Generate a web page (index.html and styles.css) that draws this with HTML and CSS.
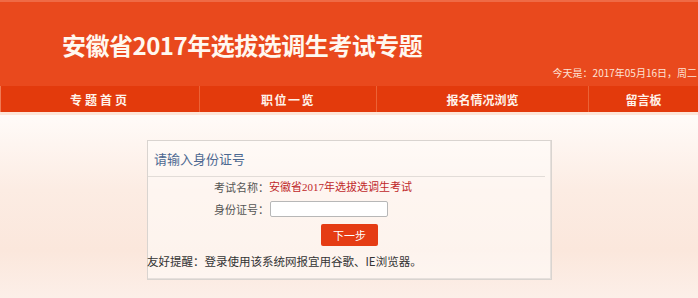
FILE: index.html
```html
<!DOCTYPE html>
<html lang="zh-CN">
<head>
<meta charset="utf-8">
<title>安徽省2017年选拔选调生考试专题</title>
<link rel="stylesheet" href="styles.css">
</head>
<body>
<header class="banner">
  <h1 class="title">安徽省2017年选拔选调生考试专题</h1>
  <div class="date">今天是：2017年05月16日，周二</div>
</header>
<nav class="nav">
  <a class="nav-item nav-home">专题首页</a>
  <a class="nav-item nav-jobs">职位一览</a>
  <a class="nav-item">报名情况浏览</a>
  <a class="nav-item">留言板</a>
</nav>
<div class="strip"></div>
<main class="main">
  <section class="box">
    <div class="box-head">请输入身份证号</div>
    <div class="box-body">
      <div class="row row-exam">
        <span class="label">考试名称：</span>
        <span class="value">安徽省2017年选拔选调生考试</span>
      </div>
      <div class="row row-id">
        <span class="label">身份证号：</span>
        <input class="id-input" type="text">
      </div>
      <div class="row row-btn">
        <button class="btn">下一步</button>
      </div>
      <p class="tip">友好提醒：登录使用该系统网报宜用谷歌、IE浏览器。</p>
    </div>
  </section>
</main>
</body>
</html>
```
FILE: styles.css
```css
html, body {
  margin: 0;
  padding: 0;
}
body {
  width: 698px;
  height: 298px;
  overflow: hidden;
  font-family: "Noto Sans CJK SC", "Noto Sans", sans-serif;
  background: linear-gradient(180deg, #ffffff 0px, #fffaf7 120px, #fcece3 190px, #fbe7dc 250px, #fcefe8 298px);
}
.banner {
  height: 86px;
  background: #e9491d;
  border-top: 2px solid #ef6a45;
  box-sizing: border-box;
  display: flex;
  flex-direction: column;
}
.title {
  margin: 31px 0 0 62px;
  font-size: 24px;
  line-height: 24px;
  font-weight: 700;
  color: #fff8f0;
  letter-spacing: -0.5px;
}
.date {
  margin-top: 11px;
  align-self: flex-end;
  padding-right: 1px;
  font-size: 10px;
  line-height: 10px;
  color: #fde3d6;
  white-space: nowrap;
}
.nav {
  height: 26px;
  background: #e33a0c;
  display: grid;
  grid-template-columns: 199px 177px 212px 1fr;
  border-left: 1px solid #ef7a55;
}
.nav-item {
  display: flex;
  align-items: center;
  justify-content: center;
  color: #fff3ea;
  font-size: 12px;
  font-weight: 700;
  border-right: 1px solid #ec6236;
}
.nav-item:last-child {
  border-right: 0;
}
.nav-home {
  letter-spacing: 3px;
}
.nav-jobs {
  letter-spacing: 1.5px;
}
.strip {
  height: 3px;
  background: #fde5d8;
}
.main {
  padding: 25px 0 0 147px;
}
.box {
  width: 405px;
  box-sizing: border-box;
  border: 1px solid #d9d4d0;
  background: rgba(255, 253, 251, 0.55);
  box-shadow: inset -4px -4px 0 -3px #e6e0dc;
}
.box-head {
  height: 36px;
  box-sizing: border-box;
  border-bottom: 1px solid #e2dcd8;
  margin-right: 6px;
  padding-left: 6px;
  font-size: 13px;
  line-height: 35px;
  color: #4d6891;
}
.box-body {
  padding: 4px 0 12px;
}
.row {
  display: flex;
  align-items: center;
}
.label {
  width: 121px;
  text-align: right;
  font-size: 11px;
  color: #555;
}
.row-exam {
  height: 12px;
  line-height: 12px;
}
.value {
  font-family: "Liberation Serif", "Noto Sans CJK SC", serif;
  font-size: 11px;
  color: #c0282a;
}
.row-id {
  margin-top: 8px;
  height: 16px;
}
.id-input {
  margin: 0 0 0 1px;
  padding: 0;
  width: 118px;
  height: 16px;
  box-sizing: border-box;
  border: 1px solid #b7b7b7;
  border-radius: 2px;
  background: #fff;
}
.row-btn {
  margin-top: 7px;
  padding-left: 173px;
}
.btn {
  width: 57px;
  height: 22px;
  padding: 0;
  border: 0;
  border-radius: 2px;
  background: #e53c14;
  color: #fff;
  font-family: "Noto Sans CJK SC", sans-serif;
  font-size: 11px;
  line-height: 22px;
}
.tip {
  margin: 9px 0 0 -1px;
  font-size: 11.5px;
  line-height: 12px;
  color: #333;
  white-space: nowrap;
}
```
